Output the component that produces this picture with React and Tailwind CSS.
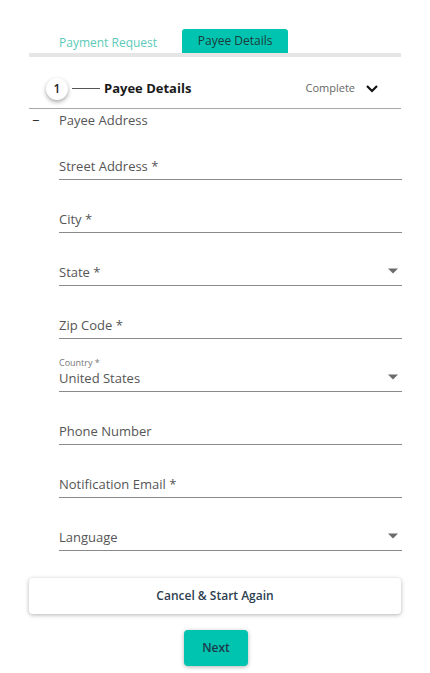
import React from "react";

function Field({ label, select, small, value }) {
  return (
    <div className="ml-[59px] mr-[28px] flex h-[53px] flex-col justify-end">
      <div className="flex items-end border-b border-[#8a8a8a] pb-[4px]">
        <div className="flex-1">
          {small && <div className="text-[9px] leading-[12px] text-[#777]">{small}</div>}
          <div className="text-[13px] leading-[18px] text-[#555]">{value || label}</div>
        </div>
        {select && (
          <svg width="12" height="8" viewBox="0 0 12 8" className="mb-[6px] mr-[3px]">
            <path d="M1 1.5h10L6 6.5z" fill="#6b6b6b" />
          </svg>
        )}
      </div>
    </div>
  );
}

export default function App() {
  return (
    <div className="min-h-[673px] w-[430px] bg-white font-['Open_Sans',sans-serif] text-[#333]">
      <div className="pt-[29px]">
        <div className="mx-[29px] flex h-[24px] items-end">
          <div className="ml-[30px] pb-[2px] text-[12px] leading-[16px] text-[#5ccab9]">Payment Request</div>
          <div className="ml-[25px] flex h-[24px] w-[106px] items-center justify-center rounded-t-[3px] bg-[#00c4b0] text-[12px] text-[#1e3a3a]">
            Payee Details
          </div>
        </div>
        <div className="mx-[29px] h-[4px] bg-[#e6e6e6]" />
      </div>

      <div className="mx-[29px] mt-[21px] flex h-[31px] items-center border-b border-[#a8a8a8] pb-[9px]">
        <div className="ml-[17px] flex h-[22px] w-[22px] items-center justify-center rounded-full bg-white text-[12px] font-semibold text-[#222] shadow-[0_2px_4px_rgba(0,0,0,0.35)]">
          1
        </div>
        <div className="ml-[4px] h-px w-[28px] bg-[#555]" />
        <div className="ml-[4px] text-[13px] font-bold text-[#1a1a1a]">Payee Details</div>
        <div className="ml-auto text-[11px] text-[#666]">Complete</div>
        <svg width="14" height="10" viewBox="0 0 14 10" className="ml-[10px] mr-[22px]">
          <path d="M2 2l5 5 5-5" fill="none" stroke="#111" strokeWidth="2.2" />
        </svg>
      </div>

      <div className="mt-[2px] flex items-center text-[13px] leading-[18px] text-[#555]">
        <span className="ml-[32px] w-[27px] text-[#222]">−</span>
        <span>Payee Address</span>
      </div>

      <div className="-mt-[2px]">
        <Field label="Street Address *" />
        <Field label="City *" />
        <Field label="State *" select />
        <Field label="Zip Code *" />
        <Field small="Country *" value="United States" select />
        <Field label="Phone Number" />
        <Field label="Notification Email *" />
        <Field label="Language" select />
      </div>

      <div className="mx-[29px] mt-[27px] flex h-[36px] items-center justify-center rounded-[4px] bg-white text-[12px] font-semibold text-[#2c3e50] shadow-[0_1px_4px_rgba(0,0,0,0.3)]">
        Cancel &amp; Start Again
      </div>
      <div className="mt-[16px] flex justify-center">
        <div className="ml-[2px] flex h-[36px] w-[64px] items-center justify-center rounded-[4px] bg-[#00c4b0] text-[12px] font-semibold text-[#1e3a4a] shadow-[0_1px_4px_rgba(0,0,0,0.3)]">
          Next
        </div>
      </div>
    </div>
  );
}
